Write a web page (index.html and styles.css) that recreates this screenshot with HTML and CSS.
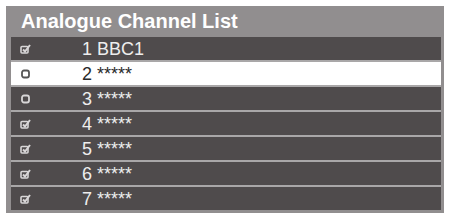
FILE: index.html
```html
<!DOCTYPE html>
<html lang="en">
<head>
    <meta charset="UTF-8">
    <title>Analogue Channel List</title>
    <link rel="stylesheet" href="styles.css">
</head>
<body>
    <div class="panel">
        <div class="panel-title">Analogue Channel List</div>
        <ul class="channel-list">
            <li class="channel">
                <svg class="tick" viewBox="0 0 11 10"><rect x="1" y="2.5" width="7" height="6.5" rx="1" fill="none" stroke="currentColor" stroke-width="1.6"/><path d="M3 5.5 L5 7.5 L10 1" fill="none" stroke="currentColor" stroke-width="2"/></svg>
                <span class="name">1 BBC1</span>
            </li>
            <li class="channel selected">
                <svg class="tick" viewBox="0 0 11 10"><rect x="2" y="1.5" width="7" height="7" rx="2" fill="none" stroke="currentColor" stroke-width="1.8"/></svg>
                <span class="name">2 *****</span>
            </li>
            <li class="channel">
                <svg class="tick" viewBox="0 0 11 10"><rect x="2" y="1.5" width="7" height="7" rx="2" fill="none" stroke="currentColor" stroke-width="1.8"/></svg>
                <span class="name">3 *****</span>
            </li>
            <li class="channel">
                <svg class="tick" viewBox="0 0 11 10"><rect x="1" y="2.5" width="7" height="6.5" rx="1" fill="none" stroke="currentColor" stroke-width="1.6"/><path d="M3 5.5 L5 7.5 L10 1" fill="none" stroke="currentColor" stroke-width="2"/></svg>
                <span class="name">4 *****</span>
            </li>
            <li class="channel">
                <svg class="tick" viewBox="0 0 11 10"><rect x="1" y="2.5" width="7" height="6.5" rx="1" fill="none" stroke="currentColor" stroke-width="1.6"/><path d="M3 5.5 L5 7.5 L10 1" fill="none" stroke="currentColor" stroke-width="2"/></svg>
                <span class="name">5 *****</span>
            </li>
            <li class="channel">
                <svg class="tick" viewBox="0 0 11 10"><rect x="1" y="2.5" width="7" height="6.5" rx="1" fill="none" stroke="currentColor" stroke-width="1.6"/><path d="M3 5.5 L5 7.5 L10 1" fill="none" stroke="currentColor" stroke-width="2"/></svg>
                <span class="name">6 *****</span>
            </li>
            <li class="channel">
                <svg class="tick" viewBox="0 0 11 10"><rect x="1" y="2.5" width="7" height="6.5" rx="1" fill="none" stroke="currentColor" stroke-width="1.6"/><path d="M3 5.5 L5 7.5 L10 1" fill="none" stroke="currentColor" stroke-width="2"/></svg>
                <span class="name">7 *****</span>
            </li>
        </ul>
    </div>
</body>
</html>
```

FILE: styles.css
```css
body {
    font-family: "Liberation Sans", Arial, sans-serif;
    background: #ffffff;
    margin: 0;
    padding: 6px 5px 0 6px;
}
.panel {
    width: 438px;
    box-sizing: border-box;
    background-color: #918e8f;
    padding: 0 3px 3px 5px;
}
.panel-title {
    height: 31px;
    line-height: 31px;
    padding-left: 10px;
    color: #ffffff;
    font-size: 20px;
    font-weight: bold;
}
.channel-list {
    list-style: none;
    margin: 0;
    padding: 0;
    display: flex;
    flex-direction: column;
    gap: 2px;
    background-color: #a9a7a8;
}
.channel {
    display: flex;
    align-items: center;
    height: 23px;
    box-sizing: border-box;
    padding: 2px 0 0 9px;
    background-color: #4f4b4c;
    color: #eeeeee;
}
.channel.selected {
    background-color: #ffffff;
    color: #2a2a2a;
}
.tick {
    width: 11px;
    height: 10px;
    margin-top: -2px;
    color: #d8d6d7;
}
.channel.selected .tick {
    color: #555555;
}
.name {
    margin-left: 51px;
    font-size: 18px;
    line-height: 21px;
}
```
